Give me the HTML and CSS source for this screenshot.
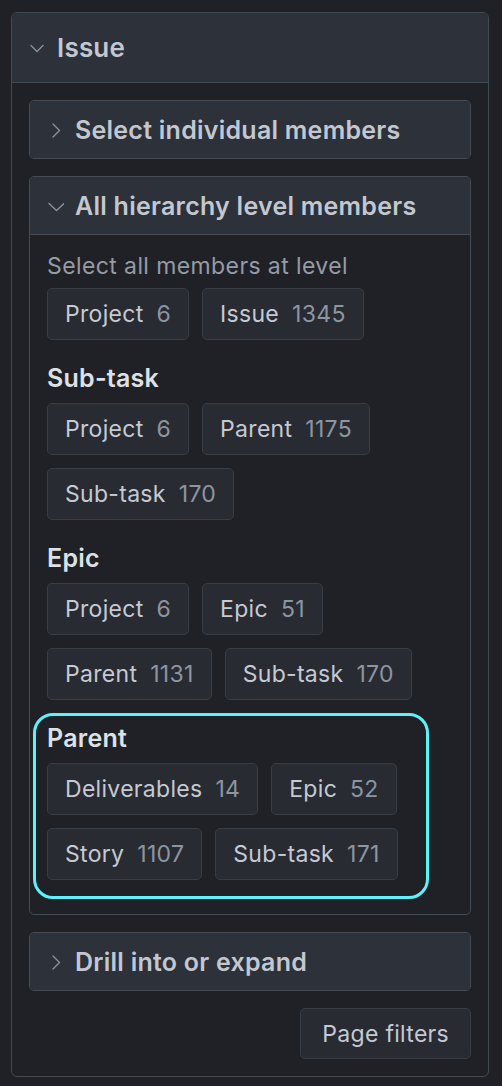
FILE: index.html
```html
<!DOCTYPE html>
<html lang="en">
<head>
<meta charset="utf-8">
<title>Issue filters</title>
<link rel="stylesheet" href="styles.css">
</head>
<body>
<section class="panel">
  <header class="panel-head">
    <svg class="chev" viewBox="0 0 16 16" width="16" height="16"><path d="M2 5.5l6 6 6-6"/></svg>
    <span class="panel-title">Issue</span>
  </header>
  <div class="panel-body">
    <div class="sub">
      <div class="sub-head">
        <svg class="chev" viewBox="0 0 16 16" width="16" height="16"><path d="M5 2l6.5 6.5L5 15"/></svg>
        <span class="sub-title">Select individual members</span>
      </div>
    </div>

    <div class="sub open">
      <div class="sub-head">
        <svg class="chev" viewBox="0 0 16 16" width="16" height="16"><path d="M1 5.5l7.5 7 7.5-7"/></svg>
        <span class="sub-title">All hierarchy level members</span>
      </div>
      <div class="sub-body">
        <div class="level">
          <div class="caption">Select all members at level</div>
          <div class="chips">
            <button class="chip"><span class="lbl">Project</span><span class="cnt">6</span></button>
            <button class="chip"><span class="lbl">Issue</span><span class="cnt">1345</span></button>
          </div>
        </div>
        <div class="level">
          <div class="level-title">Sub-task</div>
          <div class="chips">
            <button class="chip"><span class="lbl">Project</span><span class="cnt">6</span></button>
            <button class="chip"><span class="lbl">Parent</span><span class="cnt">1175</span></button>
            <button class="chip"><span class="lbl">Sub-task</span><span class="cnt">170</span></button>
          </div>
        </div>
        <div class="level">
          <div class="level-title">Epic</div>
          <div class="chips">
            <button class="chip"><span class="lbl">Project</span><span class="cnt">6</span></button>
            <button class="chip"><span class="lbl">Epic</span><span class="cnt">51</span></button>
            <button class="chip"><span class="lbl">Parent</span><span class="cnt">1131</span></button>
            <button class="chip"><span class="lbl">Sub-task</span><span class="cnt">170</span></button>
          </div>
        </div>
        <div class="level highlight">
          <div class="level-title">Parent</div>
          <div class="chips">
            <button class="chip"><span class="lbl">Deliverables</span><span class="cnt">14</span></button>
            <button class="chip"><span class="lbl">Epic</span><span class="cnt">52</span></button>
            <button class="chip"><span class="lbl">Story</span><span class="cnt">1107</span></button>
            <button class="chip"><span class="lbl">Sub-task</span><span class="cnt">171</span></button>
          </div>
        </div>
      </div>
    </div>

    <div class="sub">
      <div class="sub-head">
        <svg class="chev" viewBox="0 0 16 16" width="16" height="16"><path d="M5 2l6.5 6.5L5 15"/></svg>
        <span class="sub-title">Drill into or expand</span>
      </div>
    </div>

    <div class="actions">
      <button class="btn">Page filters</button>
    </div>
  </div>
</section>
</body>
</html>
```

FILE: styles.css
```css
* { box-sizing: border-box; }

html, body {
  margin: 0;
  padding: 0;
  background: #1f2126;
}

body {
  font-family: Inter, "Noto Sans", "Liberation Sans", sans-serif;
  color: #c3c8d0;
  padding: 12px 13px 10px 11px;
}

.panel {
  border: 1px solid #434951;
  border-radius: 6px;
  overflow: hidden;
}

.panel-head {
  height: 70px;
  background: #2c313a;
  border-bottom: 1px solid #434951;
  display: flex;
  align-items: center;
  gap: 12px;
  padding-left: 17px;
}

.chev {
  flex: none;
  fill: none;
  stroke: #8a919b;
  stroke-width: 1.4;
  stroke-linecap: round;
  stroke-linejoin: round;
}

.panel-title {
  font-size: 26px;
  font-weight: 600;
  letter-spacing: 0.2px;
  color: #c3c8d0;
}

.panel-body {
  padding: 17px;
  display: flex;
  flex-direction: column;
  gap: 17px;
}

.sub {
  border: 1px solid #464c55;
  border-radius: 5px;
  overflow: hidden;
}

.sub-head {
  height: 57px;
  background: #2c313a;
  display: flex;
  align-items: center;
  gap: 11px;
  padding-left: 18px;
}

.sub.open .sub-head {
  height: 58px;
  border-bottom: 1px solid #464c55;
}

.sub-title {
  font-size: 25px;
  font-weight: 600;
  letter-spacing: 0.25px;
  color: #c3c8d0;
}

.sub-body {
  padding: 16px 18px 34px 17px;
  display: flex;
  flex-direction: column;
}

.caption {
  font-size: 23px;
  line-height: 30px;
  letter-spacing: 0.4px;
  color: #959ca6;
  margin-bottom: 7px;
}

.level + .level {
  margin-top: 22px;
}

.level-title {
  font-size: 25px;
  line-height: 32px;
  font-weight: 600;
  letter-spacing: 0.25px;
  color: #dde1e6;
  margin-bottom: 9px;
}

.chips {
  display: flex;
  flex-wrap: wrap;
  gap: 13px;
}

.chip, .btn {
  font-family: inherit;
  height: 52px;
  padding: 0 17px;
  display: inline-flex;
  align-items: center;
  gap: 13px;
  background: #282b32;
  border: 1px solid #393d45;
  border-radius: 5px;
  font-size: 23px;
  letter-spacing: 0.3px;
  color: #c5cad3;
}

.cnt {
  color: #8d95a0;
}

.highlight {
  position: relative;
}

.highlight::after {
  content: "";
  position: absolute;
  left: -14px;
  right: 23px;
  top: -9px;
  bottom: -19px;
  border: 3px solid #5ef1f9;
  border-radius: 20px;
  pointer-events: none;
}

.actions {
  display: flex;
  justify-content: flex-end;
}

.btn {
  height: 51px;
  padding: 0 21px;
}
```
